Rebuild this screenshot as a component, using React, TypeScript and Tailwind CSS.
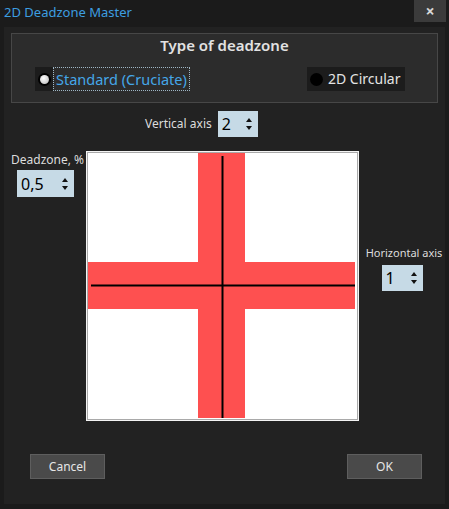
import React from 'react';

const font = { fontFamily: '"Noto Sans", "Open Sans", sans-serif' };

function Arrows() {
  return (
    <svg width="8" height="16" viewBox="0 0 8 16" className="shrink-0">
      <path d="M4 2 L7 6 L1 6 Z" fill="#111" />
      <path d="M4 14 L7 10 L1 10 Z" fill="#111" />
    </svg>
  );
}

function Spin({ value, className }: { value: string; className: string }) {
  return (
    <div className={`flex items-center justify-between bg-[#c6dae6] pl-[4px] pr-[5px] text-[16px] text-black ${className}`}>
      <span className="leading-none">{value}</span>
      <Arrows />
    </div>
  );
}

export default function App() {
  return (
    <div className="w-[449px] h-[509px] bg-[#1b1b1b] flex flex-col" style={font}>
      {/* title bar */}
      <div className="h-[27px] flex items-start justify-between shrink-0">
        <div className="pl-[4px] pt-[3px] text-[13px] text-[#3d9ee0]">2D Deadzone Master</div>
        <div className="w-[32px] h-[22px] mr-[3px] bg-[#3b3b3b] flex items-center justify-center text-[#d8d8d8] text-[16px] font-bold leading-none">
          ×
        </div>
      </div>

      <div className="mx-[4px] mb-[5px] flex-1 bg-[#222222] flex flex-col">
        {/* deadzone type group */}
        <div className="mx-[7px] mt-[6px] h-[70px] border border-[#474747] bg-[#2c2c2c] flex flex-col">
          <div className="text-center text-[15px] font-semibold text-[#e2e2e2] leading-[22px]">Type of deadzone</div>
          <div className="flex items-center justify-between mt-[11px] pl-[23px] pr-[32px]">
            <div className="flex items-center">
              <div className="w-[18px] h-[24px] bg-[#1c1c1c] flex items-center justify-center">
                <div className="w-[13px] h-[13px] rounded-full bg-black flex items-center justify-center">
                  <div className="w-[9px] h-[9px] rounded-full bg-[radial-gradient(circle_at_40%_35%,#ffffff,#b5b5b5)]" />
                </div>
              </div>
              <div className="h-[24px] px-[2px] border border-dotted border-[#9fb7c6] text-[14.5px] text-[#45a7e8] leading-[22px]">
                Standard (Cruciate)
              </div>
            </div>
            <div className="h-[24px] w-[98px] bg-[#1c1c1c] flex items-center pl-[3px]">
              <div className="w-[13px] h-[13px] rounded-full bg-black" />
              <span className="ml-[5px] text-[14px] text-[#e4e4e4] leading-none">2D Circular</span>
            </div>
          </div>
        </div>

        {/* vertical axis */}
        <div className="mt-[8px] flex items-center pl-[141px] h-[26px]">
          <span className="text-[12px] text-[#dcdcdc] -mt-[1px]">Vertical axis</span>
          <Spin value="2" className="ml-[6px] w-[40px] h-[26px]" />
        </div>

        {/* middle row */}
        <div className="mt-[14px] flex">
          <div className="w-[82px] pl-[7px] flex flex-col">
            <span className="text-[12px] text-[#dcdcdc] leading-[16px] mt-[1px]">Deadzone, %</span>
            <Spin value="0,5" className="ml-[6px] mt-[2px] w-[57px] h-[27px]" />
          </div>

          <div className="w-[273px] h-[270px] bg-[#f4f4f4] p-[1px]">
            <div className="w-full h-full border border-[#a9a9a9] bg-white">
              <svg width="269" height="266" viewBox="0 0 269 266" className="block">
                <rect x="110" y="0" width="47" height="265" fill="#fe5050" />
                <rect x="0" y="109" width="267" height="47" fill="#fe5050" />
                <line x1="134.5" y1="3" x2="134.5" y2="265" stroke="#000" strokeWidth="2" />
                <line x1="3" y1="132.5" x2="267" y2="132.5" stroke="#000" strokeWidth="2" />
              </svg>
            </div>
          </div>

          <div className="flex-1 flex flex-col items-center pt-[94px]">
            <span className="text-[11px] text-[#dcdcdc] leading-[16px] pl-[4px]">Horizontal axis</span>
            <Spin value="1" className="mt-[4px] w-[41px] h-[26px]" />
          </div>
        </div>

        {/* buttons */}
        <div className="mt-[33px] flex justify-between pl-[26px] pr-[23px]">
          <button className="w-[75px] h-[25px] bg-[#4a4a4a] border border-[#5e5e5e] text-[12px] text-[#e6e6e6]">Cancel</button>
          <button className="w-[75px] h-[25px] bg-[#4a4a4a] border border-[#5e5e5e] text-[12px] text-[#e6e6e6]">OK</button>
        </div>
      </div>
    </div>
  );
}
